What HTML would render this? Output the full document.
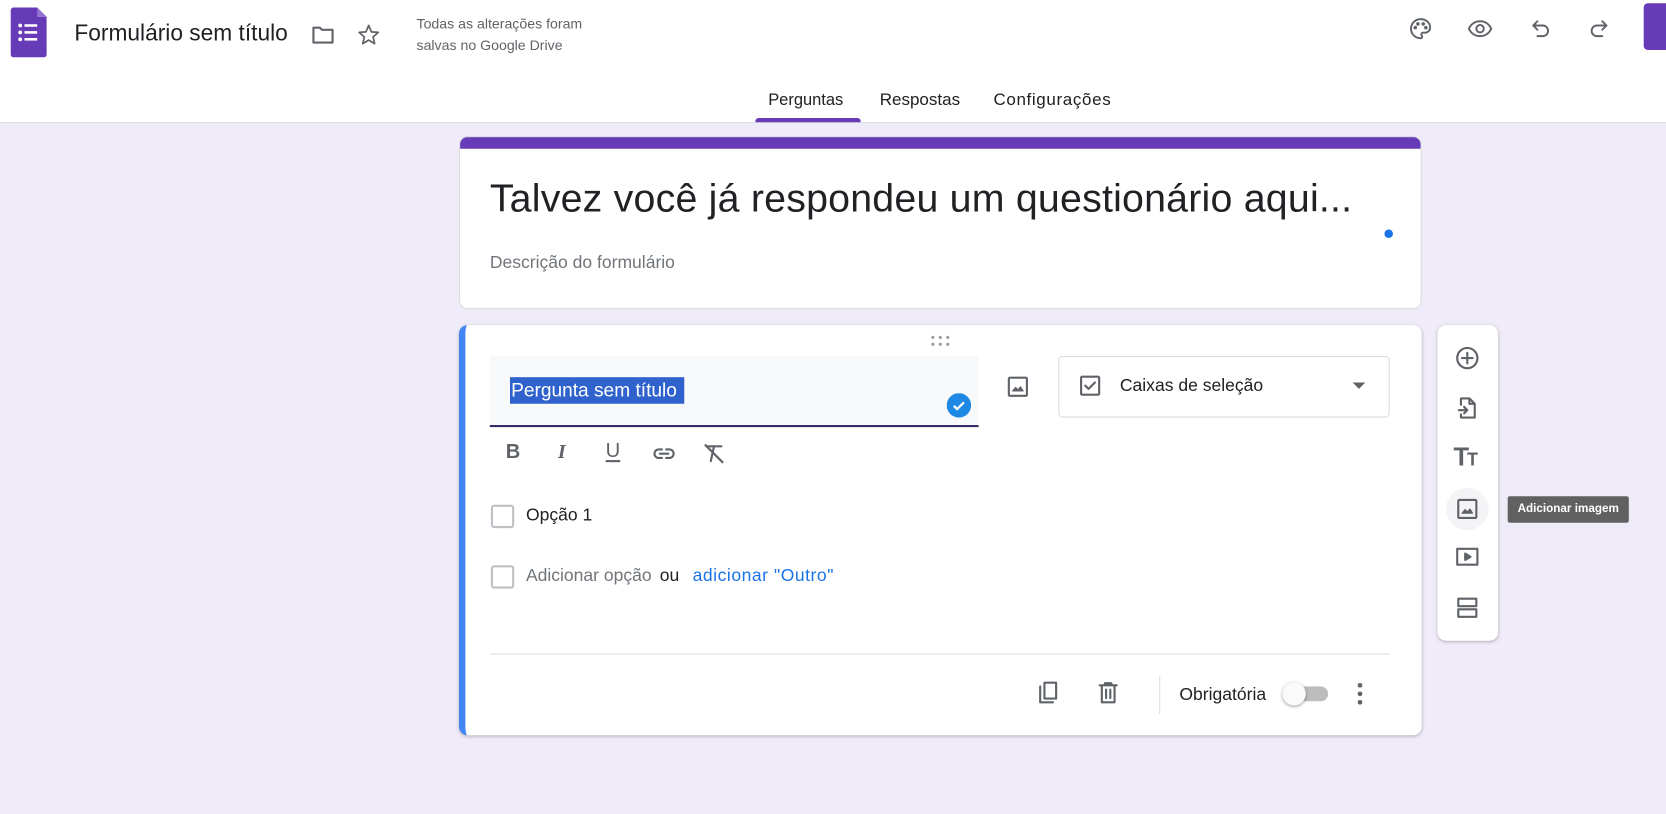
<!DOCTYPE html>
<html><head><meta charset="utf-8"><style>
*{margin:0;padding:0;box-sizing:border-box}
html,body{width:1666px;height:814px;overflow:hidden;background:#f0ebf8;font-family:"Liberation Sans",Arial,sans-serif}
#w{position:absolute;left:0;top:0;width:1568px;height:766px;transform:scale(1.0625);transform-origin:0 0}
.a{position:absolute}
svg.i{position:absolute;width:24px;height:24px;fill:none;stroke:#5f6368;stroke-width:2;stroke-linecap:round;stroke-linejoin:round}
.t{position:absolute;white-space:nowrap}
</style></head><body><div id="w">
<div class="a" style="left:0;top:0;width:1568px;height:116px;background:#fff;border-bottom:1px solid #dadce0"></div>
<svg class="a" style="left:10px;top:7px" width="34" height="47" viewBox="0 0 34 47"><path d="M3 0h22l9 9v35a3 3 0 0 1-3 3H3a3 3 0 0 1-3-3V3a3 3 0 0 1 3-3z" fill="#673ab7"/><path d="M25 0v9h9z" fill="#9575cd"/><g fill="#fff"><circle cx="9" cy="17" r="1.8"/><circle cx="9" cy="23.5" r="1.8"/><circle cx="9" cy="30" r="1.8"/><rect x="13" y="15.8" width="12" height="2.4"/><rect x="13" y="22.3" width="12" height="2.4"/><rect x="13" y="28.8" width="12" height="2.4"/></g></svg>
<div class="t" style="left:70px;top:19px;font-size:21.4px;color:#202124">Formulário sem título</div>
<svg class="i" style="left:292px;top:21px" viewBox="0 0 24 24"><path d="M3 5h6l2 2h10v12H3z"/></svg>
<svg class="i" style="left:335px;top:21px;stroke-width:1.6" viewBox="0 0 24 24"><path d="M12 3l2.6 6 6.4.5-4.9 4.3 1.5 6.3L12 16.8 6.4 20.1l1.5-6.3L3 9.5 9.4 9z"/></svg>
<div class="t" style="left:392px;top:13px;font-size:13.3px;line-height:20px;color:#5f6368">Todas as alterações foram<br>salvas no Google Drive</div>
<svg class="i" style="left:1325px;top:15px;stroke-width:1.8" viewBox="0 0 24 24"><path d="M12 3a9 9 0 0 0 0 18c1 0 1.5-.7 1.5-1.5 0-1-.8-1.3-.8-2.2 0-.8.7-1.5 1.5-1.5H16c2.8 0 5-2.2 5-5 0-4.4-4-7.8-9-7.8z"/><circle cx="7" cy="11" r=".8" fill="#5f6368"/><circle cx="9.5" cy="7.5" r=".8" fill="#5f6368"/><circle cx="14.5" cy="7.5" r=".8" fill="#5f6368"/><circle cx="17" cy="11" r=".8" fill="#5f6368"/></svg>
<svg class="i" style="left:1381px;top:15px;stroke-width:1.8" viewBox="0 0 24 24"><path d="M1.5 12C3.5 7.5 7.5 5 12 5s8.5 2.5 10.5 7c-2 4.5-6 7-10.5 7S3.5 16.5 1.5 12z"/><circle cx="12" cy="12" r="3.5"/></svg>
<svg class="i" style="left:1438px;top:15px;stroke-width:1.8" viewBox="0 0 24 24"><path d="M9 5L5 9l4 4M5 9h9a5 5 0 0 1 0 10h-5"/></svg>
<svg class="i" style="left:1493px;top:15px;stroke-width:1.8" viewBox="0 0 24 24"><path d="M15 5l4 4-4 4M19 9h-9a5 5 0 0 0 0 10h5"/></svg>
<div class="a" style="left:1547px;top:3px;width:30px;height:44px;background:#673ab7;border-radius:4px"></div>
<div class="t" style="left:723px;top:86px;font-size:15.5px;color:#202124">Perguntas</div>
<div class="a" style="left:711px;top:111px;width:99px;height:4px;background:#673ab7;border-radius:3px 3px 0 0"></div>
<div class="t" style="left:828px;top:86px;font-size:16px;color:#202124">Respostas</div>
<div class="t" style="left:935px;top:86px;font-size:16px;color:#202124;letter-spacing:.6px">Configurações</div>
<div class="a" style="left:432px;top:128px;width:906px;height:163px;background:#fff;border-radius:8px;border:1px solid #dadce0;overflow:hidden"><div style="height:11px;background:#673ab7"></div></div>
<div class="t" style="left:461px;top:166px;font-size:37px;color:#202124;letter-spacing:.2px">Talvez você já respondeu um questionário aqui...</div>
<div class="a" style="left:1303px;top:216px;width:8px;height:8px;border-radius:50%;background:#1a73e8"></div>
<div class="t" style="left:461px;top:238px;font-size:16.5px;color:#70757a">Descrição do formulário</div>
<div class="a" style="left:432px;top:306px;width:906px;height:386px;background:#fff;border-radius:8px;box-shadow:0 1px 3px rgba(0,0,0,.25);border-left:6px solid #4285f4"></div>
<svg class="a" style="left:875px;top:315px" width="20" height="12"><g fill="#9aa0a6"><circle cx="3" cy="2.5" r="1.5"/><circle cx="10" cy="2.5" r="1.5"/><circle cx="17" cy="2.5" r="1.5"/><circle cx="3" cy="9" r="1.5"/><circle cx="10" cy="9" r="1.5"/><circle cx="17" cy="9" r="1.5"/></g></svg>
<div class="a" style="left:461px;top:335px;width:460px;height:67px;background:#f8f9fa;border-bottom:2px solid #3c2a6b"></div>
<div class="t" style="left:480px;top:355px;height:25px;padding:0 0 0 1px;background:#2f62cc;color:#fff;font-size:18px;line-height:25px;width:164px">Pergunta sem título</div>
<svg class="a" style="left:891px;top:370px" width="23" height="23" viewBox="0 0 24 24"><circle cx="12" cy="12" r="12" fill="#1e88e5"/><path d="M7 12.5l3.2 3.2L17 9" stroke="#fff" stroke-width="2.2" fill="none"/></svg>
<svg class="i" style="left:946px;top:352px" viewBox="0 0 24 24"><rect x="3.5" y="3.5" width="17" height="17" rx="1"/><path d="M7 16l3-3.5 2 2.5 2.5-3L17 16z" fill="#5f6368" stroke-width="1"/></svg>
<div class="a" style="left:996px;top:335px;width:312px;height:58px;border:1px solid #dadce0;border-radius:4px"></div>
<svg class="i" style="left:1014px;top:351px" viewBox="0 0 24 24"><rect x="3.5" y="3.5" width="17" height="17" rx="1"/><path d="M7.5 12l3 3 6-6"/></svg>
<div class="t" style="left:1054px;top:354px;font-size:16.5px;color:#202124">Caixas de seleção</div>
<svg class="a" style="left:1273px;top:360px" width="12" height="7"><path d="M0 0h12L6 6z" fill="#5f6368"/></svg>
<div class="t" style="left:476px;top:415px;font-size:19px;font-weight:bold;color:#5f6368">B</div>
<div class="t" style="left:525px;top:415px;font-size:19px;font-weight:bold;font-style:italic;color:#5f6368;font-family:'Liberation Serif',serif">I</div>
<div class="t" style="left:570px;top:414px;font-size:19px;color:#5f6368;text-decoration:underline;text-underline-offset:3px;text-decoration-thickness:2px">U</div>
<svg class="i" style="left:613px;top:415px" viewBox="0 0 24 24"><path d="M10 8H7a4 4 0 0 0 0 8h3M14 8h3a4 4 0 0 1 0 8h-3M8 12h8"/></svg>
<svg class="i" style="left:660px;top:415px" viewBox="0 0 24 24"><path d="M5 5h14M12 5l-3 14M4 4l16 16"/></svg>
<div class="a" style="left:462px;top:475px;width:22px;height:22px;border:2px solid #bdc1c6;border-radius:3px"></div>
<div class="t" style="left:495px;top:476px;font-size:16.5px;color:#202124">Opção 1</div>
<div class="a" style="left:462px;top:532px;width:22px;height:22px;border:2px solid #bdc1c6;border-radius:3px"></div>
<div class="t" style="left:495px;top:533px;font-size:16.5px;color:#70757a">Adicionar opção <span style="color:#202124;margin-left:3px">ou</span> <span style="color:#1a73e8;margin-left:8px;letter-spacing:.5px">adicionar "Outro"</span></div>
<div class="a" style="left:461px;top:615px;width:847px;height:1px;background:#dadce0"></div>
<svg class="i" style="left:974px;top:640px" viewBox="0 0 24 24"><path d="M5 6v15h12"/><rect x="9" y="2.5" width="11" height="15"/></svg>
<svg class="i" style="left:1031px;top:640px" viewBox="0 0 24 24"><path d="M4 5h16M9 5V3h6v2M6 5v16h12V5M10 9v8M14 9v8"/></svg>
<div class="a" style="left:1091px;top:636px;width:1px;height:36px;background:#dadce0"></div>
<div class="t" style="left:1110px;top:645px;font-size:16.5px;color:#202124">Obrigatória</div>
<div class="a" style="left:1212px;top:646px;width:38px;height:14px;border-radius:7px;background:#bdbdbd"></div>
<div class="a" style="left:1207px;top:642px;width:22px;height:22px;border-radius:50%;background:#fafafa;box-shadow:0 1px 3px rgba(0,0,0,.4)"></div>
<svg class="a" style="left:1276px;top:642px" width="8" height="22"><g fill="#5f6368"><circle cx="4" cy="3" r="2.2"/><circle cx="4" cy="11" r="2.2"/><circle cx="4" cy="19" r="2.2"/></g></svg>
<div class="a" style="left:1353px;top:306px;width:57px;height:297px;background:#fff;border-radius:8px;box-shadow:0 1px 3px rgba(0,0,0,.25)"></div>
<div class="a" style="left:1361px;top:459px;width:40px;height:40px;border-radius:50%;background:#f4f4f6"></div>
<svg class="i" style="left:1369px;top:325px" viewBox="0 0 24 24"><circle cx="12" cy="12" r="9.5"/><path d="M12 7v10M7 12h10"/></svg>
<svg class="i" style="left:1369px;top:372px" viewBox="0 0 24 24"><path d="M6 9V3h8l5 5v13H6v-3M14 3v5h5M4 14h8M9 11l3 3-3 3"/></svg>
<div class="t" style="left:1368px;top:417px;font-size:24px;font-weight:bold;color:#5f6368;letter-spacing:-2px">T<span style="font-size:17px">T</span></div>
<svg class="i" style="left:1369px;top:467px" viewBox="0 0 24 24"><rect x="3.5" y="3.5" width="17" height="17" rx="1"/><path d="M7 16l3-3.5 2 2.5 2.5-3L17 16z" fill="#5f6368" stroke-width="1"/></svg>
<svg class="i" style="left:1369px;top:512px" viewBox="0 0 24 24"><rect x="2.5" y="4.5" width="19" height="15"/><path d="M10 9v6l5-3z" fill="#5f6368"/></svg>
<svg class="i" style="left:1369px;top:560px" viewBox="0 0 24 24"><rect x="3.5" y="3.5" width="17" height="7"/><rect x="3.5" y="13.5" width="17" height="7"/></svg>
<div class="t" style="left:1419px;top:467px;width:114px;height:25px;background:#616161;color:#fff;font-size:11px;font-weight:bold;line-height:25px;text-align:center;border-radius:2px">Adicionar imagem</div>
</div></body></html>
